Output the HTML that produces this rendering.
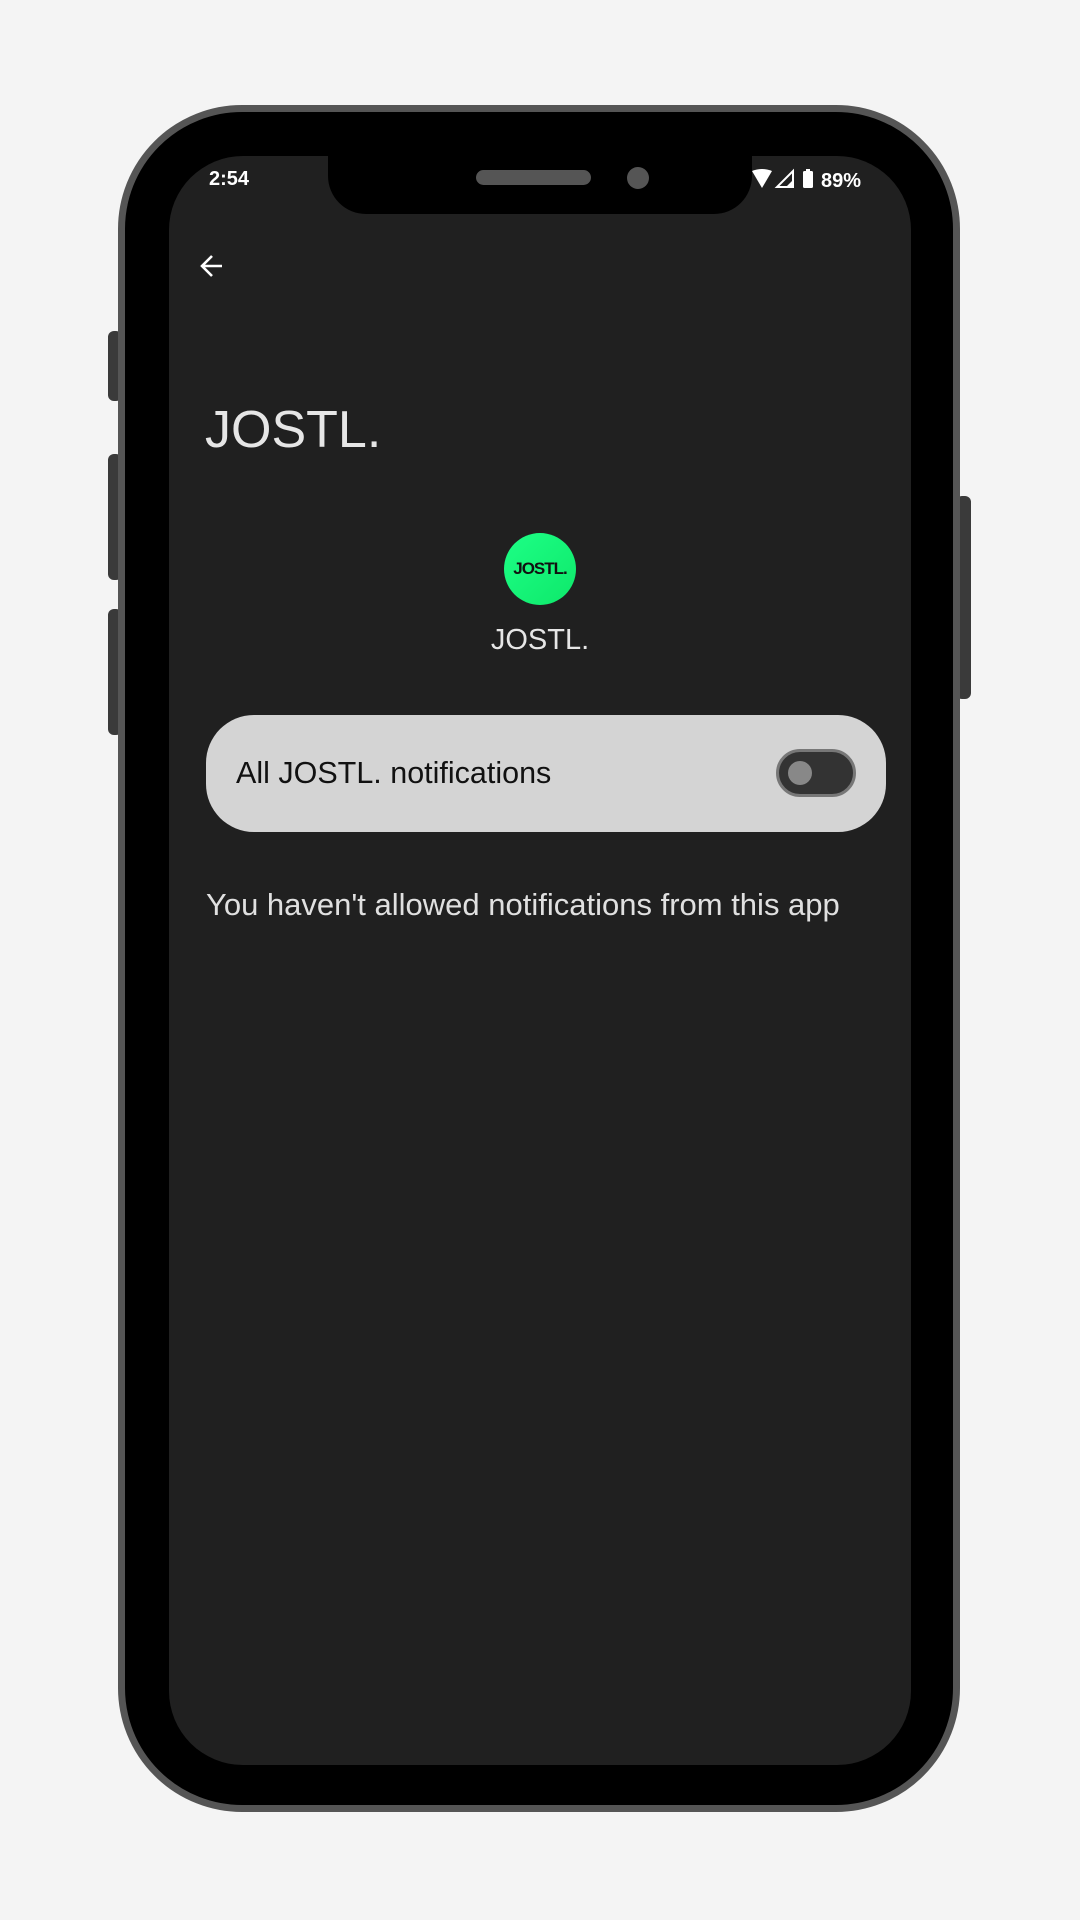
<!DOCTYPE html>
<html><head><meta charset="utf-8"><style>
*{margin:0;padding:0;box-sizing:border-box}
body{width:1080px;height:1920px;background:#f4f4f4;position:relative;overflow:hidden;font-family:"Liberation Sans",sans-serif}
.a{position:absolute}
.btn{background:#3a3a3a;border-radius:6px}
</style></head><body>
<div class="a btn" style="left:108px;top:331px;width:14px;height:70px"></div>
<div class="a btn" style="left:108px;top:454px;width:14px;height:126px"></div>
<div class="a btn" style="left:108px;top:609px;width:14px;height:126px"></div>
<div class="a btn" style="left:956px;top:496px;width:15px;height:203px"></div>
<div class="a" style="left:118px;top:105px;width:842px;height:1707px;background:#000;border:7px solid #555;border-radius:124px"></div>
<div class="a" style="left:169px;top:156px;width:742px;height:1609px;background:#202020;border-radius:74px"></div>
<div class="a" style="left:328px;top:154px;width:424px;height:60px;background:#000;border-radius:0 0 38px 38px"></div>
<div class="a" style="left:476px;top:170px;width:115px;height:15px;background:#555;border-radius:8px"></div>
<div class="a" style="left:627px;top:167px;width:22px;height:22px;background:#555;border-radius:50%"></div>
<div class="a" style="left:209px;top:168px;color:#fff;font-size:20px;font-weight:bold">2:54</div>
<svg class="a" style="left:750px;top:168px" width="120" height="22" viewBox="0 0 120 22">
<path d="M2 3 Q12 -1 22 3 L12 20 Z" fill="#fff"/>
<path d="M27 19 L43 19 L43 3 Z" fill="none" stroke="#fff" stroke-width="2"/>
<path d="M36 19 L43 19 L43 12 Z" fill="#fff"/>
<rect x="53" y="3" width="10" height="17" rx="1.5" fill="#fff"/><rect x="56" y="1" width="4" height="3" fill="#fff"/>
<text x="71" y="19" fill="#fff" font-size="20" font-weight="bold" font-family="Liberation Sans">89%</text>
</svg>
<svg class="a" style="left:198px;top:252px" width="28" height="28" viewBox="0 0 28 28"><path d="M24 14 H5 M14 4 L4 14 L14 24" fill="none" stroke="#fff" stroke-width="2.6"/></svg>
<div class="a" style="left:205px;top:400px;color:#e6e6e6;font-size:52px">JOSTL.</div>
<div class="a" style="left:504px;top:533px;width:72px;height:72px;border-radius:50%;background:linear-gradient(135deg,#1dff86,#0ee86a);display:flex;align-items:center;justify-content:center;font-weight:bold;font-size:17px;letter-spacing:-1px;color:#111">JOSTL.</div>
<div class="a" style="left:0;width:1080px;text-align:center;top:624px;color:#e6e6e6;font-size:29px">JOSTL.</div>
<div class="a" style="left:206px;top:715px;width:680px;height:117px;background:#d4d4d4;border-radius:48px"></div>
<div class="a" style="left:236px;top:756px;color:#111;font-size:30.5px">All JOSTL. notifications</div>
<div class="a" style="left:776px;top:749px;width:80px;height:48px;background:#333;border:3px solid #777;border-radius:24px"></div>
<div class="a" style="left:788px;top:761px;width:24px;height:24px;background:#888;border-radius:50%"></div>
<div class="a" style="left:206px;top:887px;color:#e0e0e0;font-size:31px">You haven't allowed notifications from this app</div>
</body></html>
